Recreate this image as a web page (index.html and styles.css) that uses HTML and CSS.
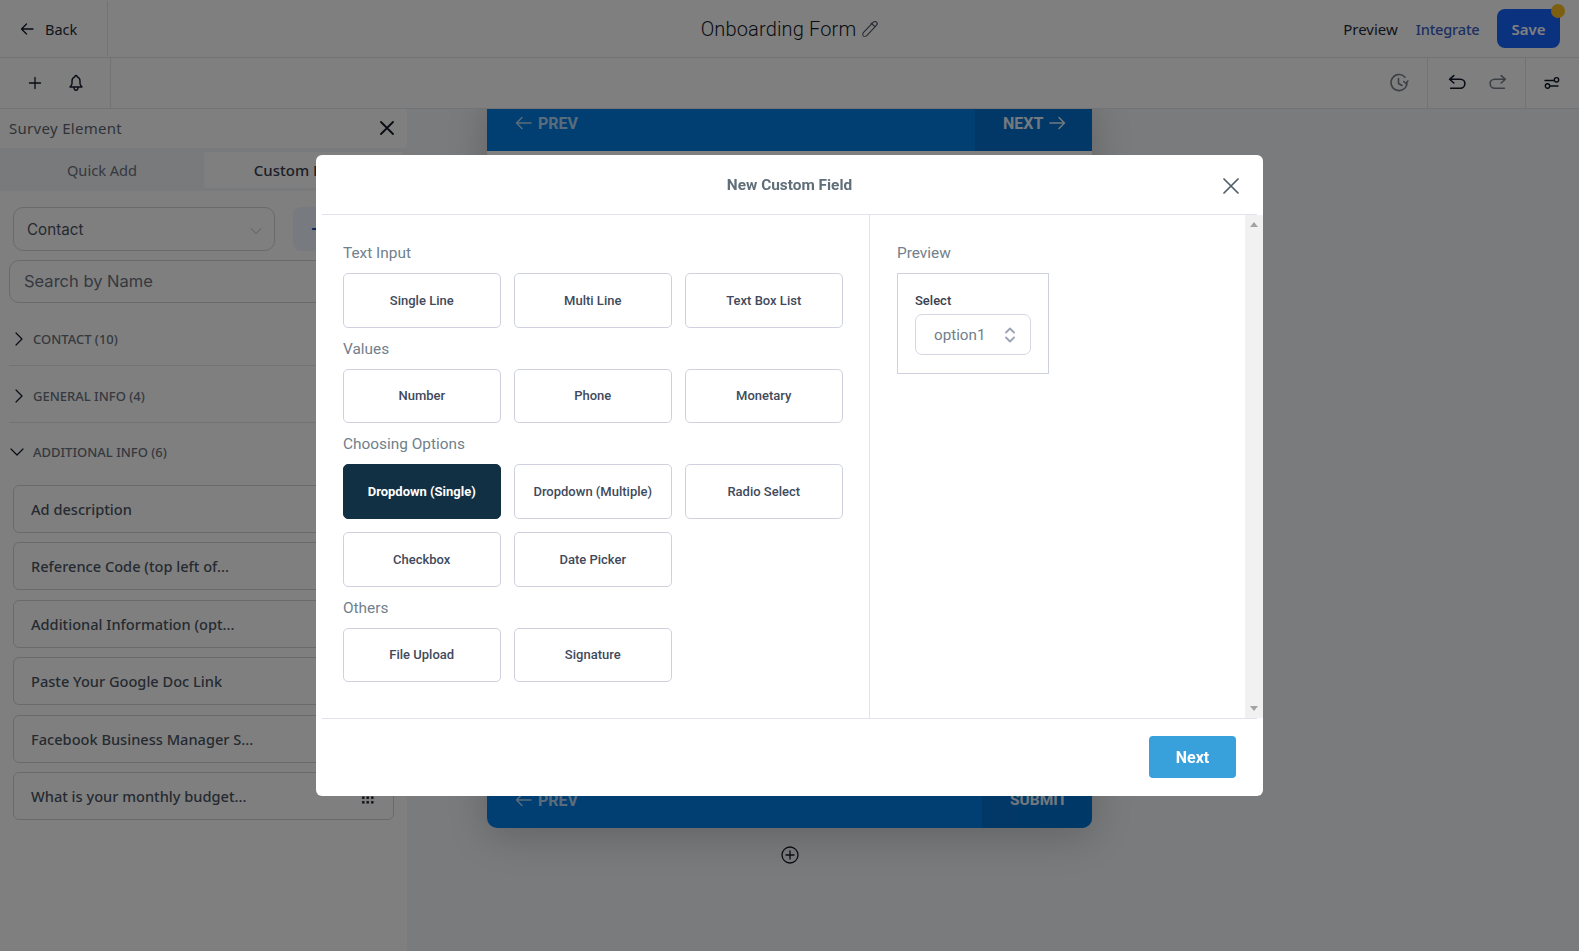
FILE: index.html
```html
<!DOCTYPE html>
<html lang="en">
<head>
    <meta charset="UTF-8">
    <title>Onboarding Form</title>
    <link rel="stylesheet" href="styles.css">
</head>
<body>
<header class="topbar">
    <a class="back">
        <svg class="icon" width="16" height="16" viewBox="0 0 16 16"><path d="M14 8H2.500M7.500 3 2.500 8l5 5"/></svg>
        <span>Back</span>
    </a>
    <div class="form-title">
        <span>Onboarding Form</span>
        <svg class="icon pencil" width="20" height="20" viewBox="0 0 18 18"><path d="M3 12.200 11.800 3c1-1 2.300-1 3.100-.2s.8 2-.2 3L6.300 14.800c-1 .9-2.700 1-3.400.3-.7-.8-.7-2 .1-2.900ZM13.600 7 10 3.700"/></svg>
    </div>
    <nav class="top-actions">
        <a class="preview-link">Preview</a>
        <a class="integrate-link">Integrate</a>
        <button class="save">Save<i class="save-dot"></i></button>
    </nav>
</header>

<div class="toolbar">
    <div class="tool-left">
        <svg class="icon" width="16" height="16" viewBox="0 0 16 16"><path d="M8 2.500v11M2.500 8h11"/></svg>
        <svg class="icon" width="16" height="18" viewBox="0 0 16 18"><path d="M8 1.500c.8 0 1.200.5 1.200 1.300 2 .6 2.800 2.200 2.800 4.200v2.500c0 1.500 1 2.200 2 3.500H2c1-1.300 2-2 2-3.500V7c0-2 .8-3.600 2.800-4.200 0-.8.400-1.300 1.200-1.300ZM6 14c.2 1.500 1 2.300 2 2.300s1.800-.8 2-2.300" stroke-width="1.400"/></svg>
    </div>
    <div class="tool-right">
        <div class="tool-group">
            <svg class="icon faded" width="20" height="20" viewBox="0 0 20 20"><path d="M18 10.500a8 8 0 1 1-2-6.300M9.500 5.500v5l3.500 2M18.800 8l-1.800 2.500L14.700 8.500" stroke-width="1.600"/></svg>
        </div>
        <div class="tool-group undo-group">
            <svg class="icon" width="19" height="19" viewBox="0 0 18 18"><path d="M5.500 1.500 1.500 5l4 3.500M1.500 5h10c3 0 4.500 2 4.500 4s-1.500 4.500-4.500 4.500H2.500" stroke-width="1.500"/></svg>
            <svg class="icon faded" width="19" height="19" viewBox="0 0 18 18"><path d="M12.500 1.500 16.500 5l-4 3.500M16.500 5h-10c-3 0-4.500 2-4.500 4s1.500 4.500 4.500 4.500h9" stroke-width="1.500"/></svg>
        </div>
        <div class="tool-settings">
            <svg class="icon" width="16" height="14" viewBox="0 0 16 14"><path d="M1 4.500h9M14 10H6" stroke-width="1.400"/><circle cx="12.500" cy="3.800" r="2.200" stroke-width="1.400"/><circle cx="3.500" cy="10" r="2.200" stroke-width="1.400"/></svg>
        </div>
    </div>
</div>

<main class="workspace">
    <aside class="sidebar">
        <div class="sidebar-head">
            <span>Survey Element</span>
            <svg class="icon" width="14" height="14" viewBox="0 0 14 14"><path d="m1 1 12 12M13 1 1 13" stroke-width="1.800"/></svg>
        </div>
        <div class="tabs">
            <div class="tab">Quick Add</div>
            <div class="tab tab-active">Custom Fields</div>
        </div>
        <div class="filter-row">
            <div class="contact-select">
                <span>Contact</span>
                <svg class="icon light" width="12" height="8" viewBox="0 0 12 8"><path d="m1 1.500 5 5 5-5" stroke-width="1"/></svg>
            </div>
            <div class="add-btn">+</div>
        </div>
        <div class="search">Search by Name</div>

        <div class="group group-line group-first">
            <svg class="icon" width="8" height="14" viewBox="0 0 8 14"><path d="m1 1 6 6-6 6" stroke-width="1.200"/></svg>
            <span>CONTACT (10)</span>
        </div>
        <div class="group group-line">
            <svg class="icon" width="8" height="14" viewBox="0 0 8 14"><path d="m1 1 6 6-6 6" stroke-width="1.200"/></svg>
            <span>GENERAL INFO (4)</span>
        </div>
        <div class="group group-open">
            <svg class="icon" width="14" height="8" viewBox="0 0 14 8"><path d="m1 1 6 6 6-6" stroke-width="1.200"/></svg>
            <span>ADDITIONAL INFO (6)</span>
        </div>

        <div class="field">Ad description<i class="drag"></i></div>
        <div class="field">Reference Code (top left of...<i class="drag"></i></div>
        <div class="field">Additional Information (opt...<i class="drag"></i></div>
        <div class="field">Paste Your Google Doc Link<i class="drag"></i></div>
        <div class="field">Facebook Business Manager S...<i class="drag"></i></div>
        <div class="field">What is your monthly budget...<i class="drag"></i></div>
    </aside>

    <section class="canvas">
        <div class="canvas-inner">
            <div class="form-card">
                <div class="form-nav">
                    <div class="nav-prev">
                        <svg class="icon nav-arrow" width="17" height="14" viewBox="0 0 17 14"><path d="M16 7H1.500M7 1.500 1.500 7 7 12.500"/></svg>
                        <span>PREV</span>
                    </div>
                    <div class="nav-next">
                        <span>NEXT</span>
                        <svg class="icon nav-arrow" width="17" height="14" viewBox="0 0 17 14"><path d="M1 7h14.500M10 1.500 15.500 7 10 12.500"/></svg>
                    </div>
                </div>
                <div class="form-body"></div>
                <div class="form-nav">
                    <div class="nav-prev">
                        <svg class="icon nav-arrow" width="17" height="14" viewBox="0 0 17 14"><path d="M16 7H1.500M7 1.500 1.500 7 7 12.500"/></svg>
                        <span>PREV</span>
                    </div>
                    <div class="nav-submit">SUBMIT</div>
                </div>
            </div>
            <svg class="icon add-page" width="18" height="18" viewBox="0 0 18 18"><circle cx="9" cy="9" r="8" stroke-width="1.300"/><path d="M9 5v8M5 9h8" stroke-width="1.300"/></svg>
        </div>
    </section>
</main>

<div class="overlay">
    <div class="modal">
        <div class="modal-head">
            <h2>New Custom Field</h2>
            <svg class="icon modal-close" width="16" height="16" viewBox="0 0 16 16"><path d="m1 1 14 14M15 1 1 15" stroke-width="1.700"/></svg>
        </div>
        <div class="modal-body">
            <div class="type-pane">
                <div class="type-label">Text Input</div>
                <div class="type-grid">
                    <div class="type-btn">Single Line</div>
                    <div class="type-btn">Multi Line</div>
                    <div class="type-btn">Text Box List</div>
                </div>
                <div class="type-label">Values</div>
                <div class="type-grid">
                    <div class="type-btn">Number</div>
                    <div class="type-btn">Phone</div>
                    <div class="type-btn">Monetary</div>
                </div>
                <div class="type-label">Choosing Options</div>
                <div class="type-grid">
                    <div class="type-btn type-selected">Dropdown (Single)</div>
                    <div class="type-btn">Dropdown (Multiple)</div>
                    <div class="type-btn">Radio Select</div>
                    <div class="type-btn">Checkbox</div>
                    <div class="type-btn">Date Picker</div>
                </div>
                <div class="type-label">Others</div>
                <div class="type-grid">
                    <div class="type-btn">File Upload</div>
                    <div class="type-btn">Signature</div>
                </div>
            </div>
            <div class="preview-pane">
                <div class="type-label">Preview</div>
                <div class="preview-box">
                    <div class="preview-field">Select</div>
                    <div class="preview-select">
                        <span>option1</span>
                        <svg class="icon updown" width="10" height="16" viewBox="0 0 10 16"><path d="m1 5.500 4-4 4 4M1 10.500l4 4 4-4" stroke-width="1.800"/></svg>
                    </div>
                </div>
            </div>
            <div class="scrollbar">
                <i class="arrow-up"></i>
                <i class="arrow-down"></i>
            </div>
        </div>
        <div class="modal-foot">
            <button class="next-btn">Next</button>
        </div>
    </div>
</div>
</body>
</html>
```

FILE: styles.css
```css
* {
    box-sizing: border-box;
}

html, body {
    height: 100%;
}

body {
    margin: 0;
    overflow: hidden;
    display: flex;
    flex-direction: column;
    background-color: white;
    color: #1f2937;
    font-family: "Noto Sans", sans-serif;
}

.icon {
    fill: none;
    stroke: #111827;
    stroke-width: 1.300;
    stroke-linecap: round;
    stroke-linejoin: round;
    flex-shrink: 0;
}

.icon.faded {
    stroke: #6b7280;
    opacity: .9;
}

.icon.light {
    stroke: #b6bac2;
}

/* top bar */
.topbar {
    height: 58px;
    flex-shrink: 0;
    display: grid;
    grid-template-columns: 1fr auto 1fr;
    align-items: center;
    border-bottom: 1px solid #e5e7eb;
}

.back {
    width: 108px;
    height: 55px;
    display: flex;
    align-items: center;
    gap: 10px;
    padding-left: 19px;
    font-size: 14.500px;
    border-right: 1px solid #e5e7eb;
}

.form-title {
    display: flex;
    align-items: center;
    gap: 4px;
    padding-left: 2px;
    font-family: Roboto, sans-serif;
    font-size: 20px;
    font-weight: 300;
    letter-spacing: .15px;
    color: #111827;
}

.pencil {
    stroke: #4b5563;
    stroke-width: 1;
}

.top-actions {
    display: flex;
    align-items: center;
    justify-content: flex-end;
    padding-right: 19px;
    font-size: 15px;
}

.preview-link {
    margin-right: 18px;
}

.integrate-link {
    margin-right: 17.500px;
    font-size: 14.600px;
    letter-spacing: -.2px;
    font-weight: 500;
    color: #3b5fc4;
}

.save {
    position: relative;
    width: 63px;
    height: 39px;
    border: 0;
    border-radius: 8px;
    background-color: #1565ff;
    color: white;
    font-family: "Noto Sans", sans-serif;
    font-size: 15px;
    font-weight: 600;
}

.save-dot {
    position: absolute;
    top: -5px;
    right: -5px;
    width: 14px;
    height: 14px;
    border-radius: 50%;
    background-color: #fbbf24;
}

/* second bar */
.toolbar {
    height: 51px;
    flex-shrink: 0;
    display: flex;
    justify-content: space-between;
    border-bottom: 1px solid #e5e7eb;
}

.tool-left {
    width: 111px;
    display: flex;
    align-items: center;
    gap: 25px;
    padding-left: 27px;
    border-right: 1px solid #e5e7eb;
}

.tool-right {
    display: flex;
}

.tool-group {
    display: flex;
    align-items: center;
    padding-right: 18px;
}

.undo-group {
    gap: 21px;
    padding: 0 18px 0 20px;
    border-left: 1px solid #e5e7eb;
    border-right: 1px solid #e5e7eb;
}

.tool-settings {
    width: 53px;
    display: flex;
    align-items: center;
    justify-content: center;
    padding-right: 2px;
}

/* page under the dialog */
.workspace {
    flex: 1;
    min-height: 0;
    display: flex;
}

.sidebar {
    width: 407px;
    flex-shrink: 0;
    overflow: hidden;
    background-color: white;
}

.sidebar-head {
    height: 39px;
    display: flex;
    align-items: center;
    justify-content: space-between;
    padding: 0 13px 1px 9px;
    font-size: 15px;
    letter-spacing: .3px;
    color: #5f6672;
}

.tabs {
    height: 43px;
    display: flex;
    align-items: center;
    padding-right: 3px;
    background-color: #f3f4f6;
}

.tab {
    width: 204px;
    text-align: center;
    font-size: 14.600px;
    color: #6b7280;
}

.tab-active {
    width: 200px;
    height: 36px;
    line-height: 36px;
    border-radius: 3px;
    background-color: white;
    font-size: 15px;
    font-weight: 500;
    color: #374151;
}

.filter-row {
    display: flex;
    gap: 18px;
    margin: 16px 0 9px 13px;
    font-family: Inter, sans-serif;
}

.contact-select {
    width: 262px;
    height: 44px;
    display: flex;
    align-items: center;
    justify-content: space-between;
    padding: 0 12px 0 13px;
    border: 1px solid #d1d5db;
    border-radius: 10px;
    font-size: 15.200px;
    color: #4b5563;
}

.contact-select .icon {
    margin-top: 4px;
}

.add-btn {
    width: 50px;
    height: 44px;
    border-radius: 8px;
    background-color: #eff4ff;
    color: #1150c8;
    text-align: center;
    line-height: 40px;
    font-size: 26px;
}

.search {
    width: 385px;
    height: 43px;
    margin-left: 9px;
    padding-left: 14px;
    line-height: 41px;
    border: 1px solid #d1d5db;
    border-radius: 10px;
    font-family: Inter, sans-serif;
    font-size: 16.500px;
    color: #6b7280;
}

.group {
    display: flex;
    align-items: center;
    margin: 0 13px 0 9px;
    font-size: 13px;
    font-weight: 500;
    color: #6b7280;
}

.group svg {
    margin-left: 6px;
}

.group span {
    margin-left: 10px;
}

.group-line {
    height: 57px;
    padding-top: 3px;
    border-bottom: 1px solid #e5e7eb;
}

.group-first {
    height: 63px;
    padding-top: 9px;
}

.group-open {
    height: 62px;
    padding-bottom: 4px;
}

.group-open svg {
    margin-left: 1px;
}

.group-open span {
    margin-left: 9px;
}

.field {
    position: relative;
    width: 381px;
    height: 48px;
    margin: 0 0 9.400px 13px;
    padding-left: 17px;
    line-height: 46px;
    border: 1px solid #d1d5db;
    border-radius: 6px;
    font-size: 14.600px;
    font-weight: 500;
    color: #4b5563;
}

.drag {
    position: absolute;
    top: 18.250px;
    right: 18.500px;
    width: 13.500px;
    height: 13.500px;
    background-image: radial-gradient(circle, #1f2937 1.200px, transparent 1.500px);
    background-size: 4.500px 4.500px;
}

.canvas {
    flex: 1;
    min-width: 0;
    overflow: hidden;
    padding-left: 80px;
    background-color: #f4f6f9;
}

.canvas-inner {
    width: 605px;
    display: flex;
    flex-direction: column;
    align-items: center;
}

.form-card {
    width: 605px;
    flex-shrink: 0;
    margin-top: -14px;
    border-radius: 10px;
    overflow: hidden;
    box-shadow: 0 8px 40px rgba(0, 0, 0, .2);
}

.form-nav {
    height: 56px;
    display: flex;
    justify-content: space-between;
    background-color: #027ee6;
    font-family: Roboto, sans-serif;
    font-size: 16px;
    font-weight: 700;
    color: white;
}

.form-body {
    height: 621px;
    background-color: white;
}

.nav-prev {
    display: flex;
    align-items: center;
    gap: 6px;
    padding-left: 28px;
    opacity: .7;
}

.nav-next {
    width: 117px;
    display: flex;
    align-items: center;
    gap: 6px;
    padding-left: 28px;
    background-color: #0270ce;
    opacity: .9;
}

.nav-submit {
    width: 110px;
    padding-left: 28px;
    line-height: 56px;
    font-size: 15.500px;
    background-color: #0270ce;
    opacity: .9;
}

.nav-arrow {
    stroke: white;
    stroke-width: 1.500;
}

.add-page {
    margin-top: 18px;
}

/* dialog */
.overlay {
    position: fixed;
    inset: 0;
    display: flex;
    justify-content: center;
    align-items: flex-start;
    padding-top: 155px;
    background-color: rgba(0, 0, 0, .5);
}

.modal {
    width: 947px;
    border-radius: 6px;
    background-color: white;
    font-family: Roboto, sans-serif;
}

.modal-head {
    position: relative;
    height: 60px;
    margin: 0 6px;
    display: flex;
    align-items: center;
    justify-content: center;
    border-bottom: 1px solid #e2e4ec;
}

.modal-head h2 {
    margin: 0;
    font-size: 15.400px;
    font-weight: 700;
    color: #5f6f7a;
}

.modal-close {
    position: absolute;
    top: 23px;
    right: 18px;
    stroke: #4f5f6a;
}

.modal-body {
    height: 503px;
    display: flex;
}

.type-pane {
    width: 554px;
    padding: 17px 0 0 27px;
    border-right: 1px solid #e2e4ec;
}

.type-label {
    height: 41px;
    line-height: 43px;
    font-size: 15.400px;
    color: #71808b;
}

.type-grid {
    display: grid;
    grid-template-columns: repeat(3, 157.500px);
    grid-auto-rows: 54.500px;
    gap: 13.500px;
}

.type-btn {
    display: flex;
    align-items: center;
    justify-content: center;
    border: 1px solid #cfd2de;
    border-radius: 5px;
    font-size: 13px;
    font-weight: 500;
    color: #3f4a5c;
}

.type-selected {
    border-color: #123044;
    background-color: #123044;
    font-weight: 700;
    color: white;
}

.preview-pane {
    flex: 1;
    padding: 17px 0 0 27px;
}

.preview-box {
    width: 152px;
    height: 101px;
    padding: 19px 17px 0;
    border: 1px solid #cfd2de;
}

.preview-field {
    height: 21px;
    font-size: 13px;
    font-weight: 500;
    color: #374151;
}

.preview-select {
    width: 116px;
    height: 41px;
    display: flex;
    align-items: center;
    justify-content: space-between;
    padding: 0 15px 0 18px;
    border: 1px solid #d5d8e2;
    border-radius: 7px;
    font-size: 15.200px;
    color: #71808b;
}

.updown {
    stroke: #9ca3b4;
}

.scrollbar {
    width: 18px;
    display: flex;
    flex-direction: column;
    justify-content: space-between;
    align-items: center;
    padding: 7px 0;
    background-color: #f1f1f1;
}

.arrow-up {
    border: 4px solid transparent;
    border-top: 0;
    border-bottom: 5px solid #a3a3a3;
}

.arrow-down {
    border: 4px solid transparent;
    border-bottom: 0;
    border-top: 5px solid #a3a3a3;
}

.modal-foot {
    height: 78px;
    margin: 0 6px;
    display: flex;
    justify-content: flex-end;
    padding: 17px 21px 0 0;
    border-top: 1px solid #e2e4ec;
}

.next-btn {
    width: 87px;
    height: 42px;
    border: 0;
    border-radius: 4px;
    background-color: #38a0db;
    color: white;
    font-family: Roboto, sans-serif;
    font-size: 16px;
    font-weight: 700;
}
```
